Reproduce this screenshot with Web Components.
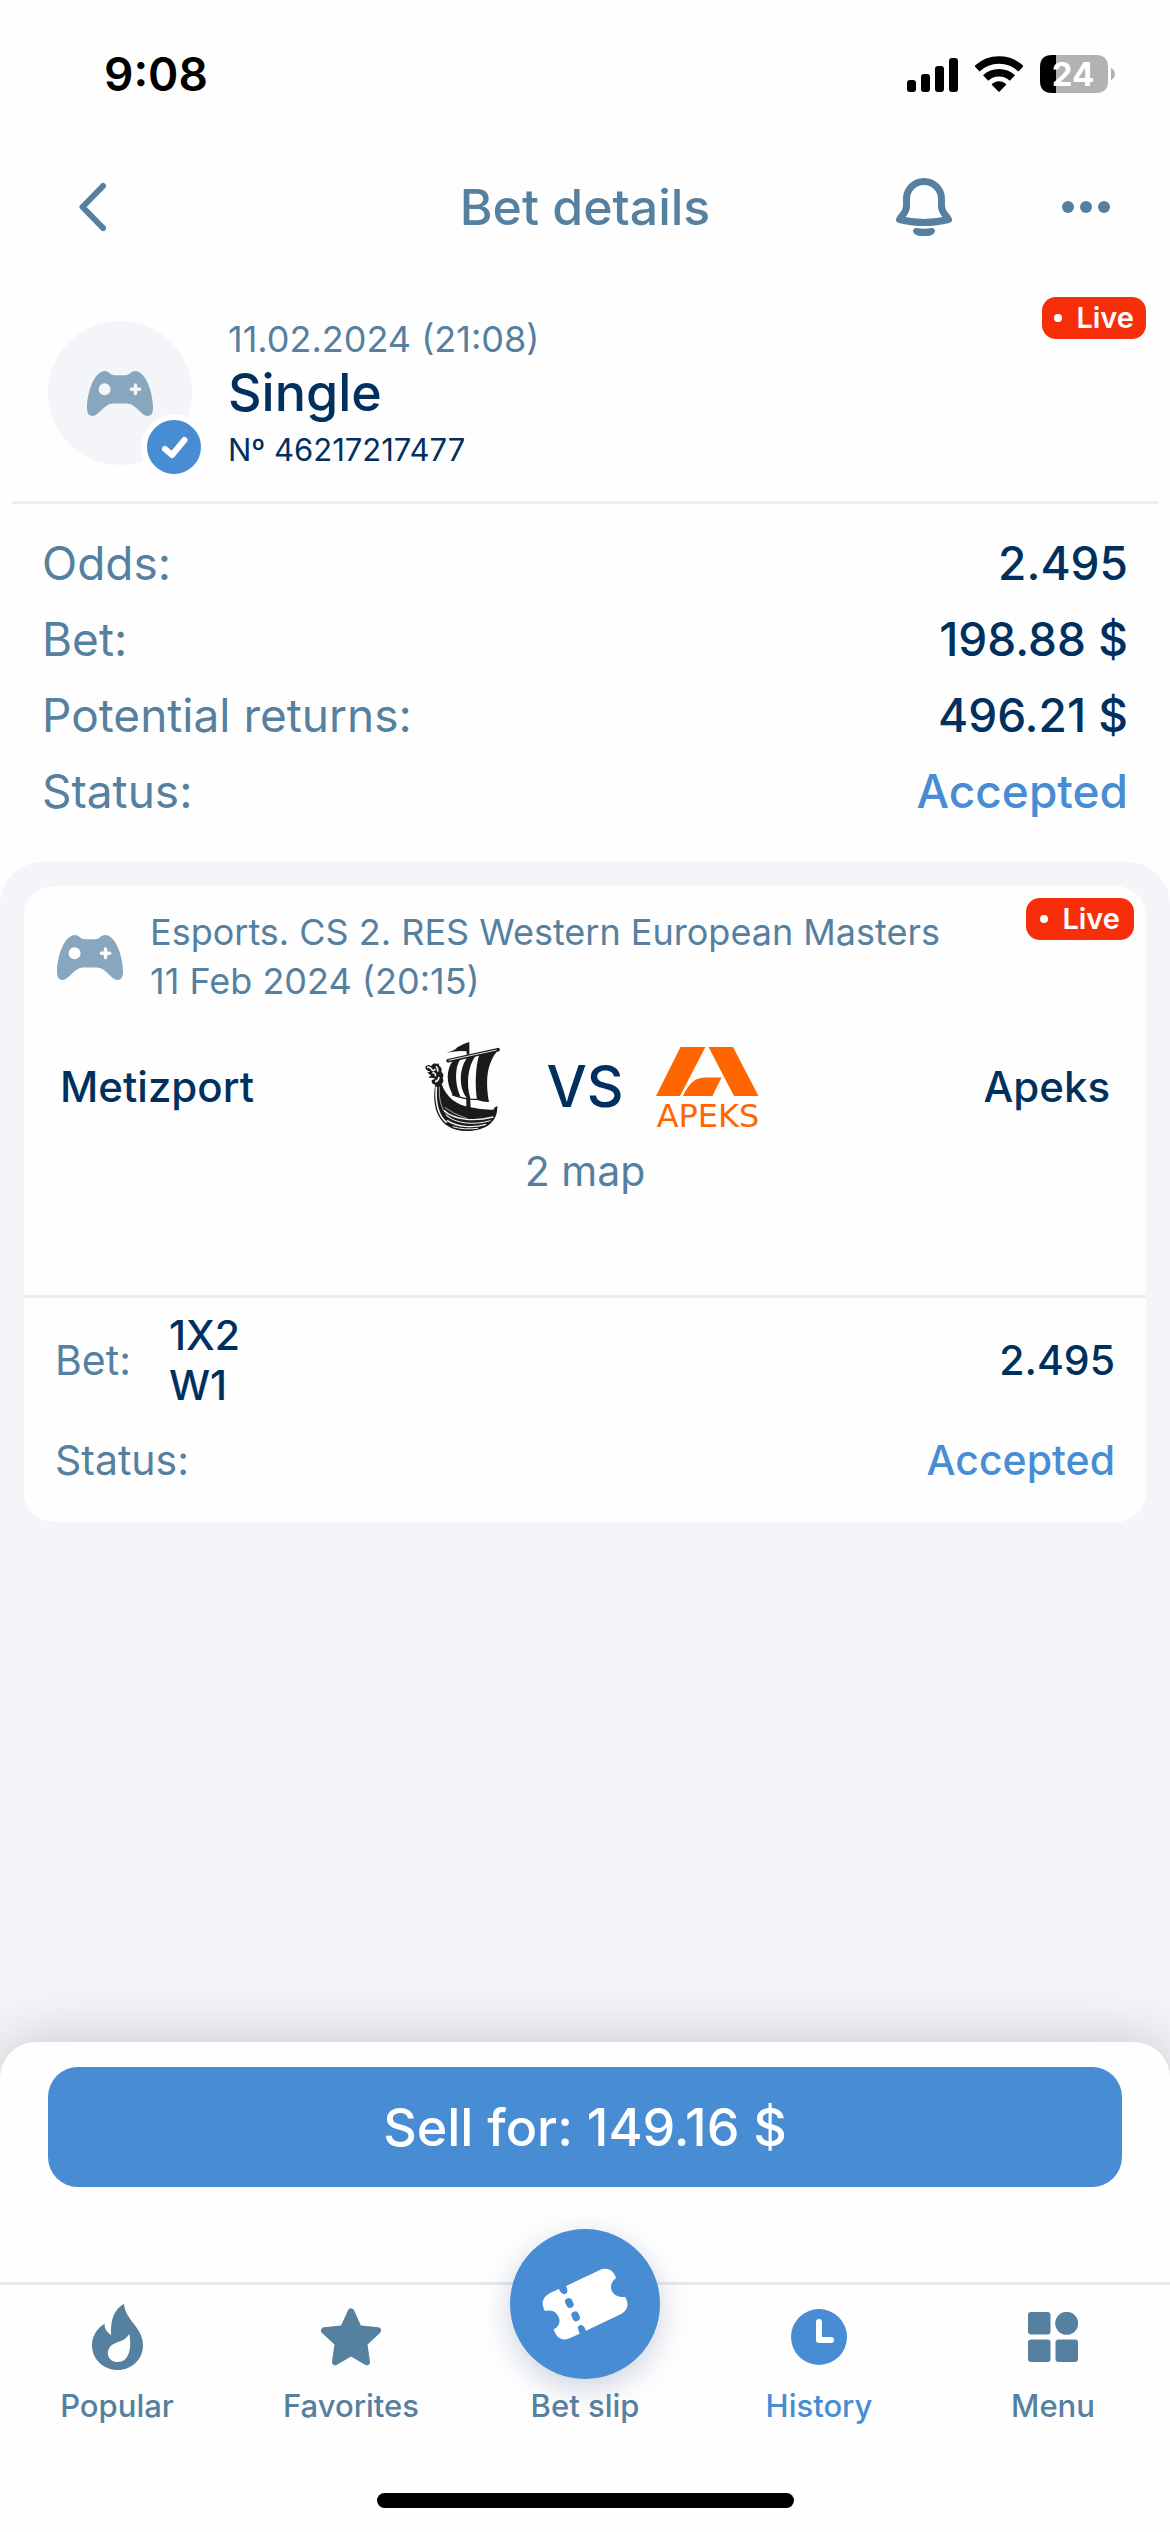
<!DOCTYPE html>
<html lang="en">
<head>
<meta charset="utf-8">
<meta name="viewport" content="width=device-width, initial-scale=1">
<title>Bet details</title>
<style>
  body {
    --muted: #5680a0;
    --ink: #00305e;
    --accent: #488dd3;
    --live: #f62f0a;
    --surface: #fefefe;
    --backdrop: #f4f5f9;
    --line: #eaeff3;
    margin: 0;
    background: var(--surface);
    color: var(--ink);
    font-family: Inter, "Liberation Sans", sans-serif;
  }
</style>
</head>
<body>
<bet-screen>
  <status-bar></status-bar>
  <page-header>Bet details</page-header>
  <bet-summary>
    <span slot="date">11.02.2024 (21:08)</span>
    <span slot="type">Single</span>
    <span slot="number">Nº 46217217477</span>
  </bet-summary>
  <bet-totals>
    <total-row label="Odds:">2.495</total-row>
    <total-row label="Bet:">198.88 $</total-row>
    <total-row label="Potential returns:">496.21 $</total-row>
    <total-row label="Status:" accent>Accepted</total-row>
  </bet-totals>
  <event-area>
    <event-card>
      <span slot="league">Esports. CS 2. RES Western European Masters</span>
      <span slot="date">11 Feb 2024 (20:15)</span>
      <span slot="home">Metizport</span>
      <span slot="away">Apeks</span>
      <span slot="stage">2 map</span>
      <span slot="market">1X2</span>
      <span slot="pick">W1</span>
      <span slot="odds">2.495</span>
      <span slot="status">Accepted</span>
    </event-card>
    <sell-sheet slot="sheet">Sell for: 149.16 $</sell-sheet>
  </event-area>
  <tab-bar></tab-bar>
</bet-screen>

<script>
function define(name, html) {
  const template = document.createElement('template');
  template.innerHTML = '<style>*{box-sizing:border-box}svg{display:block;flex:none}button{border:0;padding:0;background:none;color:inherit;font:inherit;cursor:pointer}</style>' + html;
  customElements.define(name, class extends HTMLElement {
    constructor() {
      super();
      this.attachShadow({ mode: 'open' }).append(template.content.cloneNode(true));
    }
    connectedCallback() {
      const label = this.shadowRoot.querySelector('[data-label]');
      if (label) label.textContent = this.getAttribute('label');
    }
  });
}

define('bet-screen', `
  <style>:host{display:flex;flex-direction:column;min-height:100vh}</style>
  <slot></slot>`);

define('status-bar', `
  <style>
    :host{display:flex;align-items:center;justify-content:space-between;height:147px;padding:0 54px 0 104px;color:#000}
    time{font-size:46px;line-height:60px;font-weight:600}
    .icons{display:flex;align-items:center;gap:17px}
  </style>
  <time>9:08</time>
  <div class="icons">
    <svg width="51" height="36" viewBox="0 0 51 36"><rect y="24" width="9" height="12" rx="3"/><rect x="14" y="18" width="9" height="18" rx="3"/><rect x="28" y="10" width="9" height="26" rx="3"/><rect x="42" y="2" width="9" height="34" rx="3"/></svg>
    <svg width="48" height="36" viewBox="0 0 48 36"><g fill="none" stroke="#000" stroke-width="7.5"><path d="M2 12.8A32 32 0 0 1 46 12.8"/><path d="M10.6 22A19.5 19.5 0 0 1 37.4 22"/></g><path d="M24 36L17 29Q16.500 28 17.500 27.400Q24 23 30.500 27.400Q31.500 28 31 29Z"/></svg>
    <svg width="76" height="38" viewBox="0 0 76 38"><path fill="#b2b2b2" d="M16 0H56Q68 0 68 12V26Q68 38 56 38H16Z"/><path d="M16 0H12Q0 0 0 12V26Q0 38 12 38H16Z"/><path fill="#b2b2b2" d="M71 13Q75 15 75 19T71 25Z"/><text x="33" y="31" text-anchor="middle" font-family="Inter, sans-serif" font-size="33" font-weight="700" fill="#fff">24</text></svg>
  </div>`);

define('page-header', `
  <style>
    :host{display:grid;grid-template-columns:1fr auto 1fr;align-items:center;height:120px;padding:0 60px;color:var(--muted)}
    h1{margin:0;font-size:50px;line-height:60px;font-weight:500}
    .back{justify-self:start;padding:0 18px}
    .actions{display:flex;align-items:center;justify-content:flex-end;gap:110px}
  </style>
  <button class="back" aria-label="Back"><svg width="28" height="50" viewBox="0 0 28 50" fill="none" stroke="currentColor" stroke-width="6" stroke-linecap="round" stroke-linejoin="round"><path d="M25 4L4.500 25L25 46"/></svg></button>
  <h1><slot></slot></h1>
  <div class="actions">
    <button aria-label="Notifications"><svg width="56" height="58" viewBox="0 0 56 58"><path fill="none" stroke="currentColor" stroke-width="7" stroke-linejoin="round" d="M28 3.500C18.500 3.500 10.500 11 10.500 21V28C10.500 36 4.500 37.500 3.500 41.500Q15 44.500 28 44.500Q41 44.500 52.500 41.500C51.500 37.500 45.500 36 45.500 28V21C45.500 11 37.500 3.500 28 3.500Z"/><path fill="currentColor" d="M17 53C17 50.500 19 49.600 21 50C25.500 51 30.500 51 35 50C37 49.600 39 50.500 39 53C38.500 56.500 34 58.500 28 58.500S17.500 56.500 17 53Z"/></svg></button>
    <button aria-label="More"><svg width="48" height="12" viewBox="0 0 48 12" fill="currentColor"><circle cx="6" cy="6" r="6"/><circle cx="24" cy="6" r="6"/><circle cx="42" cy="6" r="6"/></svg></button>
  </div>`);

define('game-icon', `
  <style>:host{display:block;color:#88a6bd}</style>
  <svg width="66" height="45" viewBox="0 0 66 45" fill="currentColor"><path fill-rule="evenodd" d="M18 0C22 0 23.500 4.300 28 4.300H38C42.500 4.300 44 0 48 0C59 0 66 22 66 37C66 42 64 45 60.500 45C54 45 49 32.500 40 32.500H26C17 32.500 12 45 5.500 45C2 45 0 42 0 37C0 22 7 0 18 0ZM17.600 12.300a6 6 0 1 0 0 12a6 6 0 1 0 0-12ZM48.500 12.300Q46.800 12.300 46.800 14V16.500H44.300Q42.600 16.500 42.600 18.300T44.300 20.100H46.800V22.500Q46.800 24.200 48.500 24.200T50.200 22.500V20.100H52.700Q54.400 20.100 54.400 18.300T52.700 16.500H50.200V14Q50.200 12.300 48.500 12.300Z"/></svg>`);

define('live-badge', `
  <style>
    :host{display:flex;align-items:center;gap:14px;height:42px;padding:0 12px;border-radius:14px;background:var(--live);color:#fff;font-size:29px;line-height:42px;font-weight:600}
    i{width:8px;height:8px;border-radius:50%;background:currentColor}
  </style>
  <i></i><span>Live</span>`);

define('bet-summary', `
  <style>
    :host{display:flex;align-items:flex-start;gap:36px;position:relative;margin:0 12px;padding:48px 36px 24px;border-bottom:3px solid var(--line)}
    .avatar{position:relative;display:grid;place-items:center;width:144px;height:144px;margin-top:6px;border-radius:50%;background:var(--backdrop)}
    .check{position:absolute;right:-15px;bottom:-15px;border:6px solid var(--surface);border-radius:50%;background:var(--accent)}
    .date{font-size:36px;line-height:48px;color:var(--muted)}
    .type{font-size:52px;line-height:60px;font-weight:500}
    .number{font-size:31px;line-height:54px}
    live-badge{position:absolute;top:30px;right:12px}
  </style>
  <div class="avatar"><game-icon></game-icon>
    <div class="check"><svg width="54" height="54" viewBox="0 0 54 54" fill="none" stroke="#fff" stroke-width="6" stroke-linecap="round" stroke-linejoin="round"><path d="M18 29L25 35L37.500 20"/></svg></div>
  </div>
  <div>
    <div class="date"><slot name="date"></slot></div>
    <div class="type"><slot name="type"></slot></div>
    <div class="number"><slot name="number"></slot></div>
  </div>
  <live-badge></live-badge>`);

define('bet-totals', `
  <style>:host{display:block;padding:21px 42px 33px}</style>
  <slot></slot>`);

define('total-row', `
  <style>
    :host{display:flex;justify-content:space-between;font-size:46px;line-height:76px}
    .label{color:var(--muted)}
    .value{font-weight:500}
    :host([accent]) .value{color:var(--accent)}
  </style>
  <span class="label" data-label></span><span class="value"><slot></slot></span>`);

define('event-area', `
  <style>
    :host{display:flex;flex:1;flex-direction:column;border-radius:42px 42px 0 0;background:var(--backdrop);overflow:hidden}
    .cards{flex:1;padding:24px}
  </style>
  <div class="cards"><slot></slot></div>
  <slot name="sheet"></slot>`);

define('ship-logo', `
  <style>:host{display:block}</style>
  <svg width="77" height="91" viewBox="78 63 231 273" fill="#1b1b1b">
    <path d="M145 98Q172 92 178 82Q192 72 214 66V104H206V94Q184 90 145 98Z"/>
    <path d="M166 120Q178 117 190 114C168 140 171 196 188 230Q176 231 164 224C146 190 142 152 166 120Z"/>
    <path d="M208 112L234 106C208 140 205 195 216 230L218 262H205V232C184 205 181 150 208 112Z"/>
    <path d="M244 103L300 90C266 132 262 180 273 246Q258 247 237 240C230 190 233 138 244 103Z"/>
    <path d="M162 224Q200 240 240 238" fill="none" stroke="#1b1b1b" stroke-width="4"/>
    <path d="M150 122L300 89" stroke="#1b1b1b" stroke-width="11" stroke-linecap="round"/>
    <path d="M152 121L296 90" stroke="#ddd" stroke-width="3"/>
    <path d="M112 192C100 258 118 332 205 333C262 334 300 306 298 258Q288 262 286 269Q250 270 218 262C176 256 145 232 131 192Z"/>
    <g fill="none" stroke="#f4f4f4">
      <path d="M115 200C112 240 118 285 146 308" stroke-width="5"/>
      <path d="M124 200C122 245 132 275 158 294" stroke-width="2"/>
      <path d="M138 271C165 299 225 306 286 291" stroke-width="4"/>
      <path d="M143 285C175 312 228 316 278 302" stroke-width="3"/>
      <path d="M147 301C178 322 224 325 264 313" stroke-width="4"/>
      <path d="M164 320Q198 330 240 325" stroke-width="3"/>
      <path d="M140 262Q165 282 208 296" stroke-width="2"/>
    </g>
    <path d="M82 140Q90 131 99 138Q109 125 117 133Q122 124 124 138Q134 146 130 156Q140 164 134 174Q139 184 132 191L115 196Q99 193 101 181L112 176Q101 172 91 174L99 166L88 158L97 154Q82 153 82 140Z"/>
    <g fill="none" stroke="#eee" stroke-width="5"><path d="M87 142Q97 140 101 148T112 147"/><path d="M103 158Q115 159 112 169"/><path d="M111 185Q121 184 123 171"/><path d="M114 139Q121 146 119 155"/></g>
  </svg>`);

define('apeks-logo', `
  <style>:host{display:block}</style>
  <svg width="106" height="82" viewBox="0 0 106 82" fill="#ff6600" overflow="visible">
    <path d="M25.500 1H50.500L25 50H1ZM53.500 1H78L103.500 50H79ZM28 50C33 40 38 31.500 50 31.500H66.500L57.500 50Z"/>
    <text x="53" y="81" text-anchor="middle" font-family="DejaVu Sans, sans-serif" font-size="32">APEKS</text>
  </svg>`);

define('event-card', `
  <style>
    :host{display:block;position:relative;border-radius:30px;background:var(--surface);font-size:41px;line-height:50px}
    .head{display:flex;align-items:center;gap:27px;padding:22px 33px 0;font-size:36px;line-height:49px;color:var(--muted)}
    .head div{display:flex;flex-direction:column}
    .match{display:grid;grid-template-columns:1fr auto 1fr;align-items:center;gap:31px;padding:35px 36px 14px;font-size:42px;font-weight:500}
    .team{display:flex;align-items:center;justify-content:space-between}
    .logo{display:grid;place-items:center;width:106px}
    .vs{font-size:57px}
    .stage{padding-bottom:99px;text-align:center;color:var(--muted);border-bottom:3px solid var(--line)}
    .bets{padding:12px 31px 37px}
    .row{display:flex;align-items:center;font-weight:500}
    .row + .row{margin-top:25px}
    .label{font-weight:400;color:var(--muted)}
    .picks{display:flex;flex-direction:column;margin-left:38px}
    .value{margin-left:auto}
    .accent{color:var(--accent)}
    live-badge{position:absolute;top:12px;right:12px;padding:0 14px}
  </style>
  <div class="head"><game-icon></game-icon><div><slot name="league"></slot><slot name="date"></slot></div></div>
  <div class="match">
    <div class="team"><slot name="home"></slot><div class="logo"><ship-logo></ship-logo></div></div>
    <span class="vs">VS</span>
    <div class="team"><div class="logo"><apeks-logo></apeks-logo></div><slot name="away"></slot></div>
  </div>
  <div class="stage"><slot name="stage"></slot></div>
  <div class="bets">
    <div class="row"><span class="label">Bet:</span><div class="picks"><slot name="market"></slot><slot name="pick"></slot></div><span class="value"><slot name="odds"></slot></span></div>
    <div class="row"><span class="label">Status:</span><span class="value accent"><slot name="status"></slot></span></div>
  </div>
  <live-badge></live-badge>`);

define('sell-sheet', `
  <style>
    :host{display:block;padding:25px 48px 95px;border-radius:36px 36px 0 0;background:var(--surface);box-shadow:0 0 60px rgba(0,0,0,.2)}
    button{display:block;width:100%;height:120px;border-radius:30px;background:var(--accent);color:#fff;font-size:52px;font-weight:500}
  </style>
  <button><slot></slot></button>`);

define('tab-bar', `
  <style>
    :host{display:block;position:relative;border-top:3px solid #e3eaef;background:var(--surface)}
    nav{display:grid;grid-template-columns:repeat(5,1fr);padding-top:19px}
    a{display:flex;flex-direction:column;align-items:center;justify-content:flex-end;gap:16px;height:122px;color:var(--muted);font-size:31px;line-height:40px;font-weight:500;text-decoration:none}
    a[aria-current]{color:var(--accent)}
    .icon{display:grid;place-items:center;height:66px}
    .slip{gap:7px}
    .disc{display:grid;place-items:center;flex:none;width:150px;height:150px;border-radius:50%;background:var(--accent);box-shadow:0 9px 30px rgba(50,80,140,.25)}
    .home{width:417px;height:15px;margin:67px auto 24px;border-radius:8px;background:#000}
  </style>
  <nav>
    <a href="#popular"><span class="icon"><svg width="51" height="66" viewBox="159 312 153 198" fill="currentColor"><path fill-rule="evenodd" d="M255 312C217 332 215 378 217 405C203 396 196 386 197 371C175 384 159 407 159 435C159 478 193 510 236 510S312 478 312 435C312 382 259 362 255 312ZM271 402C256 428 226 424 213 440C199 458 208 486 236 486C270 486 279 446 271 402Z"/></svg></span>Popular</a>
    <a href="#favorites"><span class="icon"><svg width="62" height="58" viewBox="842 320 182 174" fill="currentColor" stroke="currentColor" stroke-width="20" stroke-linejoin="round"><path d="M933 331L956 382L1013 388L972 426L980 482L933 454L886 482L894 426L853 388L910 382Z"/></svg></span>Favorites</a>
    <a href="#slip" class="slip"><span class="disc"><svg width="86" height="72" viewBox="186 204 258 216"><path fill="#fff" d="M195 333C181 310 188 289 215 277L237 267C242 285 262 288 262 272Q263 265 258 258L355 212C380 198 402 210 408 235C378 254 396 298 435 290C449 312 442 332 425 341L318 392C313 374 300 371 294 380Q293 388 299 401L265 416C245 423 230 415 221 388C256 370 234 322 195 333Z"/><g fill="#488dd3"><rect x="257" y="294" width="22" height="30" rx="10" transform="rotate(-25 268 309)"/><rect x="276" y="334" width="22" height="30" rx="10" transform="rotate(-25 287 349)"/></g></svg></span>Bet slip</a>
    <a href="#history" aria-current="page"><span class="icon"><svg width="56" height="56" viewBox="0 0 56 56"><circle cx="28" cy="28" r="28" fill="currentColor"/><path d="M28 13V31H40" fill="none" stroke="#fff" stroke-width="6" stroke-linecap="round" stroke-linejoin="round"/></svg></span>History</a>
    <a href="#menu"><span class="icon"><svg width="50" height="50" viewBox="0 0 50 50" fill="currentColor"><rect width="22.500" height="22.500" rx="3"/><circle cx="38.700" cy="11.300" r="11.500"/><rect y="27.500" width="22.500" height="22.500" rx="3"/><rect x="27.500" y="27.500" width="22.500" height="22.500" rx="3"/></svg></span>Menu</a>
  </nav>
  <div class="home"></div>`);
</script>
</body>
</html>
